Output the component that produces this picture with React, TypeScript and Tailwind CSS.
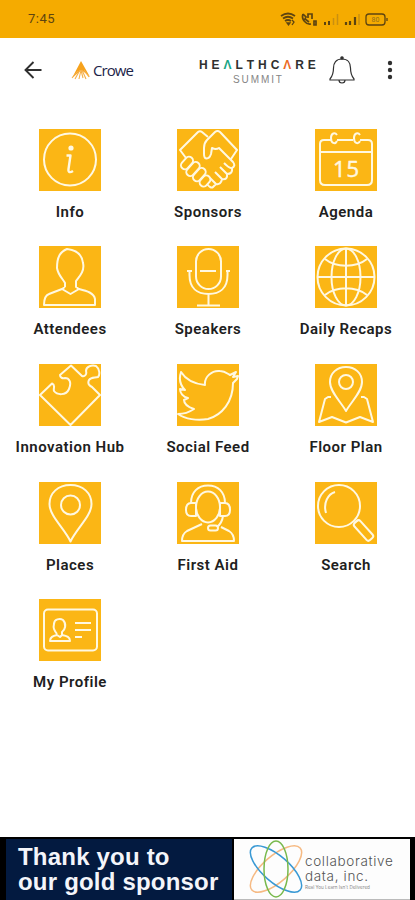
import type { ReactNode } from "react";

interface MenuItem {
  label: string;
  icon: ReactNode;
}

const personPath =
  "M26 41V37C24 33 19 29 18 22C18 11 21 6 28 3C37 4 43 8 44 17C46 25 40 31 37 35V41L40 43C48 45 55 47 56 53V59H5C5 53 7 49 10 48L23 43L31.5 48L40 43M26 41L23 43";

const items: MenuItem[] = [
  {
    label: "Info",
    icon: (
      <>
        <circle cx="31" cy="30.5" r="26" />
        <circle cx="32" cy="19" r="1.6" fill="#fff8e1" />
        <path d="M27.5 26.5H31.5L29.5 40C29 43.5 31 44 34 42" strokeWidth="2.4" />
      </>
    ),
  },
  {
    label: "Sponsors",
    icon: (
      <>
        <path d="M9 29L3 21L21 3Q23 1.500 25 3L31 8" />
        <path d="M54 30L60 21L43 3Q40.500 1 38 3L30 11Q27 14 27 19V25C27 31 32 31 34 25L35 19Q39 21 42 19L56 33Q59 37 55 39Q53 40 47 34" />
        <path d="M55 39Q56 45 50 45L43 38M50 45Q51 51 45 50L38 43M45 50Q44 56 39 55L33 49M39 55L36 58Q34 60 30 55" />
        <rect x="3" y="30" width="14" height="8" rx="4" transform="rotate(-48 10 34)" />
        <rect x="8" y="36" width="16" height="8" rx="4" transform="rotate(-48 16 40)" />
        <rect x="15" y="42" width="15" height="8" rx="4" transform="rotate(-48 22 46)" />
        <rect x="22" y="48" width="12" height="8" rx="4" transform="rotate(-48 28 52)" />
      </>
    ),
  },
  {
    label: "Agenda",
    icon: (
      <>
        <path d="M16 11H9Q5 11 5 15V51Q5 56 10 56H52Q57 56 57 51V15Q57 11 53 11H45M22 11H38M5 23H57" />
        <path d="M22 6C20 3 16 4 16 9C16 14 20 16 22 12M45 6C43 3 39 4 39 9C39 14 43 16 45 12" />
        <text
          x="31.500"
          y="47.500"
          textAnchor="middle"
          fontSize="22"
          letterSpacing="1"
          fill="#fff8e1"
          strokeWidth=".5"
          className="font-['Open_Sans',sans-serif]"
        >
          15
        </text>
      </>
    ),
  },
  { label: "Attendees", icon: <path d={personPath} /> },
  {
    label: "Speakers",
    icon: (
      <>
        <rect x="19" y="3" width="25" height="40" rx="12.500" />
        <path d="M23 25H39M10 25H15M49 25H53M12.500 25V29C12.500 42 20 48 31.500 48S50.500 42 50.500 29V25M31.500 48V59.500M20 59.500H43" />
      </>
    ),
  },
  {
    label: "Daily Recaps",
    icon: (
      <>
        <circle cx="31" cy="31" r="28.500" />
        <ellipse cx="31" cy="31" rx="14.500" ry="28.500" />
        <path d="M31 2.500V59.500M2.500 31H59.500M10 13C21 22 41 22 52 13M10 49C21 40 41 40 52 49" />
      </>
    ),
  },
  {
    label: "Innovation Hub",
    icon: (
      <path d="M1 31L13 19.500C17 21 14 24 15 27C18 31 27 32 30 25C33 18 30 14 26 14C23 15 21 13 21 11L32 1.500L43 12C46 13 48 10 47 7C47 2 53 1 57 2C61 5 61 11 59 13C56 14 52 13 50 16C48 20 51 22 53 23L61 31L31.500 61Z" />
    ),
  },
  {
    label: "Social Feed",
    icon: (
      <path d="M4 8C9 16 18 20 28 21C27 13 35 6 43 7C48 7 51 10 53 11L59 8L56 13L61 12L60 15L56 19C56 38 45 51 31 55C20 57 8 55 1 50C8 50 14 47 17 45C11 43 7 40 7 36L11 34C6 33 3 29 3 25L8 26C3 21 2 14 4 8Z" />
    ),
  },
  {
    label: "Floor Plan",
    icon: (
      <>
        <path d="M31 47C26 38 15 28 15 18C15 9 22 3 31 3S47 9 47 18C47 28 36 38 31 47Z" />
        <circle cx="31" cy="18" r="7" />
        <path d="M16 33H13L10 35L4 58L17 53L31 58.500L45 53L58 58L52 35L49 33H46" />
      </>
    ),
  },
  {
    label: "Places",
    icon: (
      <>
        <path d="M31.500 59.500C25 46 10.500 34 10.500 22C10.500 11 19 3 31.500 3S52.500 11 52.500 22C52.500 34 38 46 31.500 59.500Z" />
        <circle cx="31.500" cy="23" r="9.500" />
      </>
    ),
  },
  {
    label: "First Aid",
    icon: (
      <>
        <ellipse cx="31" cy="25" rx="12" ry="15.500" />
        <path d="M14 21C14 10 21 3.500 31 3.500S48 10 48 21M19 21H14Q9 21 9 28Q9 34 14 34H19ZM43 21H48Q53 21 53 28Q53 34 48 34H43ZM46 34Q45 41 40 45" />
        <rect x="31" y="43.500" width="10" height="5" rx="2.500" />
        <path d="M25 42L10 49Q5 52 5 59H57Q57 52 52 49L44 45" />
      </>
    ),
  },
  {
    label: "Search",
    icon: (
      <>
        <circle cx="24" cy="24" r="21" />
        <path d="M11 31C8 21 13 12 20 10M39 41L43 38" />
        <rect x="37" y="44.500" width="23" height="8" rx="2.500" transform="rotate(48 48.500 48.500)" />
      </>
    ),
  },
  {
    label: "My Profile",
    icon: (
      <>
        <rect x="5" y="10.500" width="53" height="41" rx="4" />
        <path d="M18 35C15 31 14 29 15 25C15 20 21 19 24 21C28 25 26 31 23 33V36C28 37 31 38 31 42H11C11 38 14 37 18 36L21 38L23 36" />
        <path d="M36 24H52M36 31H52M36 38H43" />
      </>
    ),
  },
];

function StatusBar() {
  return (
    <div className="flex h-[37.5px] items-center justify-between bg-[#f5ab00] pr-[26px] pl-7 text-[#5d4410]">
      <span className="text-[13px] tracking-[0.5px]">7:45</span>
      <svg width="109" height="16" viewBox="0 0 109 16" fill="none" stroke="currentColor" strokeWidth="1.300">
        <path d="M1 5Q8 0 15 5M3 7.500Q8 4 13 7.500M5 10Q8 8 11 10" strokeWidth="1.800" />
        <path d="M7 12H10L8.500 14ZM12 9L14 11L12 14" />
        <path d="M23 3C21 8 26 14 31 13M23 3L26 6L25 8L29 11M28 7V3H32V8M34 10V14H36V10Z" strokeWidth="1.700" />
        <path d="M45 11V14M49 10V14" strokeWidth="2" />
        <path d="M53.500 7V14M57.500 3V14" stroke="#c98f10" strokeWidth="1.500" />
        <path d="M66 11V14M70 10V14M75 6V14" strokeWidth="2.200" />
        <path d="M79 3V14" stroke="#c98f10" strokeWidth="1.500" />
        <rect x="86" y="3" width="19" height="11" rx="3" />
        <path d="M107 7V10" />
        <text x="95.500" y="11" fontSize="7" textAnchor="middle" fill="#94701b" stroke="none">
          80
        </text>
      </svg>
    </div>
  );
}

function EventLogo() {
  return (
    <div className="ml-[66px] w-[117px] pt-[3px]">
      <div className="flex justify-between font-['Liberation_Sans',Arial,sans-serif] text-[12px] leading-[13px] font-bold text-[#303030]">
        <span>H</span>
        <span>E</span>
        <span className="text-[#18a584]">Λ</span>
        <span>L</span>
        <span>T</span>
        <span>H</span>
        <span>C</span>
        <span className="text-[#ec6b25]">Λ</span>
        <span>R</span>
        <span>E</span>
      </div>
      <div className="mt-[2px] ml-[34px] flex w-[49px] justify-between font-['Liberation_Sans',Arial,sans-serif] text-[10px] leading-[11px] text-[#858585]">
        {"SUMMIT".split("").map((c, i) => (
          <span key={i}>{c}</span>
        ))}
      </div>
    </div>
  );
}

function Toolbar() {
  return (
    <header className="flex h-[65px] items-center pl-6">
      <svg width="18" height="18" viewBox="0 0 18 18" fill="none" stroke="#303030" strokeWidth="1.900">
        <path d="M17.500 9H1.500M9.500 1L1.500 9L9.500 17" />
      </svg>
      <svg className="ml-[29px]" width="19" height="19" viewBox="0 0 19 19">
        <path d="M10 0L19 16L13 11L10 9L7 12L1 17Z" fill="#f6a21c" />
        <path
          d="M1 17L7 10M4 18L9 9M8 18L10 9M12 17L10 9M15 18L11 9M18 16L13 9"
          stroke="#f6b04a"
          strokeWidth="1.100"
        />
      </svg>
      <span className="ml-[3px] w-[40px] font-['Open_Sans',sans-serif] text-[15px] tracking-[-0.95px] text-[#1c2448]">
        Crowe
      </span>
      <EventLogo />
      <svg className="ml-[13px]" width="26" height="29" viewBox="0 0 26 29" fill="none" stroke="#303030" strokeWidth="1.200">
        <path d="M13 3C7 3 4.500 7 4.500 12C4.500 18 3.500 20 1 23V24H25V23C22.500 20 21.500 18 21.500 12C21.500 7 19 3 13 3Z" />
        <path d="M10 24C10 28 16 28 16 24" />
        <circle cx="13" cy="2" r="1.200" fill="#303030" />
      </svg>
      <svg className="ml-[32px]" width="6" height="20" viewBox="0 0 6 20" fill="#303030">
        <circle cx="3" cy="3" r="2.200" />
        <circle cx="3" cy="10" r="2.200" />
        <circle cx="3" cy="17" r="2.200" />
      </svg>
    </header>
  );
}

function SponsorBanner() {
  return (
    <footer className="flex h-[63px] bg-black pt-[2px] pr-[5px] pl-[6px]">
      <div className="w-[226px] bg-[#031a40] pt-[5px] pl-[12px] font-['Liberation_Sans',Arial,sans-serif] text-[24px] leading-[25px] font-bold tracking-[0.2px] whitespace-nowrap text-[#f4f5fa]">
        <p>Thank you to</p>
        <p>our gold sponsor</p>
      </div>
      <div className="ml-[2px] flex flex-1 border-b border-[#bbb] bg-[#fdfdfd]">
        <svg className="ml-[14px] shrink-0" width="56" height="60" viewBox="0 0 56 60" fill="none" strokeWidth="1.500">
          <ellipse cx="28" cy="30" rx="32" ry="13" stroke="#f6ba83" transform="rotate(-41 28 30)" />
          <ellipse cx="28" cy="30" rx="32" ry="13" stroke="#3999d4" transform="rotate(41 28 30)" />
          <ellipse cx="28" cy="30" rx="12" ry="28" stroke="#78b94c" />
        </svg>
        <div className="pt-[15px] pl-px font-['Inter',sans-serif] whitespace-nowrap text-[#545454]">
          <p className="text-[13.5px] leading-[15px] font-light tracking-[0.65px]">collaborative</p>
          <p className="text-[13.5px] leading-[15px] font-light tracking-[0.65px]">data, inc.</p>
          <p className="mt-px text-[4.6px] leading-[6px] text-[#888]">Real You Learn Isn&apos;t Delivered</p>
        </div>
      </div>
    </footer>
  );
}

export default function App() {
  return (
    <div className="flex h-[900px] w-[415px] flex-col overflow-hidden bg-white font-['Roboto',sans-serif]">
      <StatusBar />
      <Toolbar />
      <main className="grid flex-1 auto-rows-[117.7px] grid-cols-3 content-start pt-[26px] pl-px">
        {items.map((item) => (
          <div key={item.label} className="flex flex-col items-center">
            <svg
              className="h-[62px] w-[62px] shrink-0 bg-[#fbb615]"
              viewBox="0 0 62 62"
              fill="none"
              stroke="#fff8e1"
              strokeWidth="2"
              strokeLinejoin="round"
            >
              {item.icon}
            </svg>
            <span className="mt-[11px] text-[15px] leading-5 font-semibold tracking-[0.5px] whitespace-nowrap text-[#202020]">
              {item.label}
            </span>
          </div>
        ))}
      </main>
      <SponsorBanner />
    </div>
  );
}
